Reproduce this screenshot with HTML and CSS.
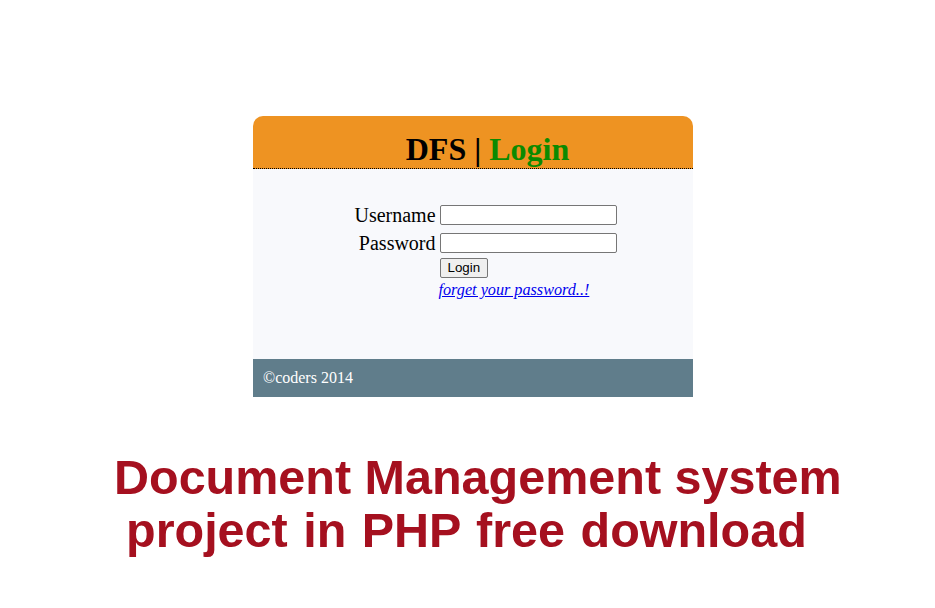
FILE: index.html
```html
<!DOCTYPE html>
<html>
<head>
<meta charset="utf-8">
<title>DFS | Login</title>
<link rel="stylesheet" href="styles.css">
</head>
<body>
<div class="page">
  <div class="card">
    <div class="card-head">
      <h1 class="title">DFS | <span class="title-accent">Login</span></h1>
    </div>
    <div class="card-body">
      <form class="login-form">
        <label class="lbl" for="u">Username</label>
        <input class="txt" id="u" type="text">
        <label class="lbl lbl-2" for="p">Password</label>
        <input class="txt txt-2" id="p" type="password">
        <span class="spacer row-3"></span>
        <div class="row-3"><button type="button" class="btn">Login</button></div>
        <span class="spacer row-4"></span>
        <div class="row-4"><a class="forgot" href="#">forget your password..!</a></div>
      </form>
    </div>
    <div class="card-foot">©coders 2014</div>
  </div>
  <div class="caption">
    <span class="cap-line cap-1">Document Management system</span>
    <span class="cap-line cap-2">project in PHP free download</span>
  </div>
</div>
</body>
</html>
```

FILE: styles.css
```css
html, body {
  margin: 0;
  padding: 0;
  background: #ffffff;
}

.page {
  width: 935px;
  height: 608px;
  padding-top: 116px;
  box-sizing: border-box;
  overflow: hidden;
}

.card {
  width: 440px;
  margin-left: 253px;
  font-family: "Liberation Serif", "Times New Roman", serif;
}

.card-head {
  background: #ee9322;
  border-radius: 10px 10px 0 0;
  padding: 15px 0 0 29px;
  height: 37px;
  border-bottom: 1px dotted #000000;
  text-align: center;
}

.title {
  margin: 0;
  font-size: 32px;
  line-height: 37px;
  font-weight: bold;
  color: #000000;
}

.title-accent {
  color: #0b8a00;
}

.card-body {
  background: #f8f9fc;
  height: 190px;
  box-sizing: border-box;
  padding: 35px 0 0 25px;
  display: flex;
  justify-content: center;
}

.login-form {
  display: grid;
  grid-template-columns: auto 177px;
  column-gap: 4px;
  align-items: center;
  align-content: start;
  margin: 0;
}

.lbl {
  font-size: 20px;
  line-height: 22px;
  height: 22px;
  text-align: right;
  color: #000000;
}

.lbl-2 {
  margin-top: 6px;
}

.txt {
  width: 177px;
  height: 20px;
  box-sizing: border-box;
  border: 1px solid #767676;
  border-radius: 2px;
  background: #ffffff;
  margin: 0;
  padding: 1px 2px;
}

.txt-2 {
  margin-top: 6px;
}

.row-3 {
  margin-top: 4px;
  height: 20px;
}

.btn {
  font-family: "Liberation Sans", Arial, sans-serif;
  font-size: 13.33px;
  height: 20px;
  padding: 0 7px;
  margin: 0;
  border: 1px solid #767676;
  border-radius: 2px;
  background: #efefef;
  color: #000000;
  line-height: 16px;
}

.row-4 {
  margin-top: 3px;
  height: 18px;
  line-height: 18px;
}

.forgot {
  font-size: 16.2px;
  font-style: italic;
  color: #0000ee;
  text-decoration: underline;
  margin-left: -1px;
}

.card-foot {
  background: #607d8b;
  color: #ffffff;
  font-size: 16px;
  line-height: 18px;
  height: 38px;
  box-sizing: border-box;
  padding: 10px 0 0 10px;
}

.caption {
  margin-top: 54px;
  font-family: "Liberation Sans", Arial, sans-serif;
  font-weight: bold;
  font-size: 48.5px;
  line-height: 53px;
  color: #a5101f;
}

.cap-line {
  display: block;
  white-space: nowrap;
}

.cap-1 {
  padding-left: 114px;
}

.cap-2 {
  padding-left: 126px;
  word-spacing: 2px;
}
```
